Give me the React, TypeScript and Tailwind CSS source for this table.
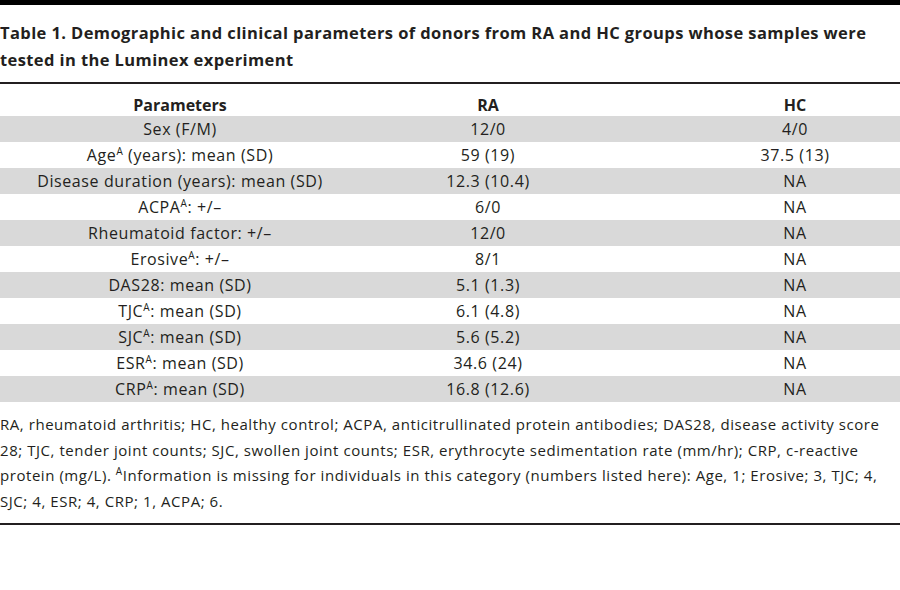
import React from 'react';

function Sup() {
  return <span className="relative -top-[6px] text-[10px] leading-none">A</span>;
}

const rows: { p: React.ReactNode; ra: string; hc: string }[] = [
  { p: 'Sex (F/M)', ra: '12/0', hc: '4/0' },
  { p: <>Age<Sup /> (years): mean (SD)</>, ra: '59 (19)', hc: '37.5 (13)' },
  { p: 'Disease duration (years): mean (SD)', ra: '12.3 (10.4)', hc: 'NA' },
  { p: <>ACPA<Sup />: +/–</>, ra: '6/0', hc: 'NA' },
  { p: 'Rheumatoid factor: +/–', ra: '12/0', hc: 'NA' },
  { p: <>Erosive<Sup />: +/–</>, ra: '8/1', hc: 'NA' },
  { p: 'DAS28: mean (SD)', ra: '5.1 (1.3)', hc: 'NA' },
  { p: <>TJC<Sup />: mean (SD)</>, ra: '6.1 (4.8)', hc: 'NA' },
  { p: <>SJC<Sup />: mean (SD)</>, ra: '5.6 (5.2)', hc: 'NA' },
  { p: <>ESR<Sup />: mean (SD)</>, ra: '34.6 (24)', hc: 'NA' },
  { p: <>CRP<Sup />: mean (SD)</>, ra: '16.8 (12.6)', hc: 'NA' },
];

export default function App() {
  return (
    <div className="w-[900px] h-[590px] bg-white text-[#231f20] overflow-hidden" style={{ fontFamily: '"Open Sans", sans-serif' }}>
      <div className="h-[5px] bg-black" />
      <h1 className="pt-[14px] text-[16.5px] leading-[27px] font-bold tracking-[0.4px] whitespace-nowrap">
        Table 1. Demographic and clinical parameters of donors from RA and HC groups whose samples were
        <br />
        tested in the Luminex experiment
      </h1>
      <div className="mt-[9px] h-[2px] bg-[#231f20]" />
      <div className="grid grid-cols-[360px_256px_1fr] h-[32px] items-end text-[16px] leading-[26px] font-bold">
        <div className="text-center translate-y-[2px]">Parameters</div>
        <div className="text-center translate-y-[2px]">RA</div>
        <div className="text-center pl-[74px] translate-y-[2px]">HC</div>
      </div>
      {rows.map((r, i) => (
        <div
          key={i}
          className={`grid grid-cols-[360px_256px_1fr] h-[26px] items-center text-[16px] leading-[26px] tracking-[0.6px] ${i % 2 === 0 ? 'bg-[#d9d9d9]' : 'bg-white'}`}
        >
          <div className="text-center">{r.p}</div>
          <div className="text-center">{r.ra}</div>
          <div className="text-center pl-[74px]">{r.hc}</div>
        </div>
      ))}
      <p className="mt-[10px] text-[15px] leading-[25.7px] tracking-[0.55px] whitespace-nowrap">
        RA, rheumatoid arthritis; HC, healthy control; ACPA, anticitrullinated protein antibodies; DAS28, disease activity score
        <br />
        28; TJC, tender joint counts; SJC, swollen joint counts; ESR, erythrocyte sedimentation rate (mm/hr); CRP, c-reactive
        <br />
        protein (mg/L). <Sup />Information is missing for individuals in this category (numbers listed here): Age, 1; Erosive; 3, TJC; 4,
        <br />
        SJC; 4, ESR; 4, CRP; 1, ACPA; 6.
      </p>
      <div className="mt-[8px] h-[2px] bg-[#231f20]" />
    </div>
  );
}
